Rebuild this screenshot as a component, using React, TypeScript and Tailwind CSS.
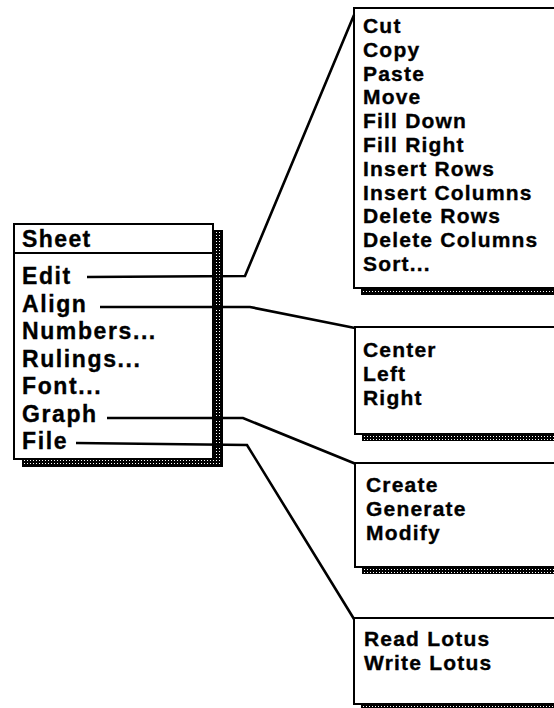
import React from "react";

type BoxProps = {
  left: number;
  top: number;
  width: number;
  height: number;
  dx: number;
  dy: number;
  className?: string;
  children: React.ReactNode;
};

function ShadowBox({ left, top, width, height, dx, dy, className, children }: BoxProps) {
  return (
    <>
      <div
        className="absolute border border-black bg-black bg-[radial-gradient(circle,#ffffff_0.55px,transparent_1px)] bg-[length:3px_3px]"
        style={{ left: left + dx, top: top + dy, width, height }}
      />
      <div
        className={"absolute border-2 border-black bg-white " + (className ?? "")}
        style={{ left, top, width, height }}
      >
        {children}
      </div>
    </>
  );
}

const editItems = [
  "Cut",
  "Copy",
  "Paste",
  "Move",
  "Fill Down",
  "Fill Right",
  "Insert Rows",
  "Insert Columns",
  "Delete Rows",
  "Delete Columns",
  "Sort...",
];

const sheetItems = ["Edit", "Align", "Numbers...", "Rulings...", "Font...", "Graph", "File"];

function SubList({ items, lh }: { items: string[]; lh: string }) {
  return (
    <div className={"flex flex-col text-[21px] font-bold tracking-[1.2px] text-black [-webkit-text-stroke:0.35px_black] " + lh}>
      {items.map((t) => (
        <div key={t} className="whitespace-nowrap">
          {t}
        </div>
      ))}
    </div>
  );
}

export default function App() {
  return (
    <div className="relative h-[708px] w-[554px] overflow-hidden bg-white font-['Liberation_Sans',Arial,Helvetica,sans-serif] text-black">
      {/* Main Sheet menu */}
      <ShadowBox left={13} top={223} width={201} height={237} dx={9} dy={7}>
        <div className="flex h-full flex-col [-webkit-text-stroke:0.35px_black]">
          <div className="border-b-2 border-black pl-[7px] pt-[1px] text-[23px] font-bold leading-[26px] tracking-[1.4px]">
            Sheet
          </div>
          <div className="flex flex-col pl-[7px] pt-[9px] text-[23px] font-bold leading-[27.5px] tracking-[1.6px]">
            {sheetItems.map((t) => (
              <div key={t} className="whitespace-nowrap">
                {t}
              </div>
            ))}
          </div>
        </div>
      </ShadowBox>

      {/* Edit submenu */}
      <ShadowBox left={353} top={7} width={230} height={282} dx={8} dy={6} className="pl-[8px] pt-[5px]">
        <SubList items={editItems} lh="leading-[23.8px]" />
      </ShadowBox>

      {/* Align submenu */}
      <ShadowBox left={354} top={326} width={230} height={109} dx={8} dy={6} className="pl-[7px] pt-[10px]">
        <SubList items={["Center", "Left", "Right"]} lh="leading-[24px]" />
      </ShadowBox>

      {/* Graph submenu */}
      <ShadowBox left={354} top={462} width={230} height={106} dx={8} dy={6} className="pl-[10px] pt-[9px]">
        <SubList items={["Create", "Generate", "Modify"]} lh="leading-[24px]" />
      </ShadowBox>

      {/* File submenu */}
      <ShadowBox left={353} top={617} width={230} height={88} dx={8} dy={6} className="pl-[9px] pt-[8px]">
        <SubList items={["Read Lotus", "Write Lotus"]} lh="leading-[24px]" />
      </ShadowBox>

      {/* Connectors */}
      <svg
        className="pointer-events-none absolute left-0 top-0"
        width={554}
        height={708}
        viewBox="0 0 554 708"
      >
        <g fill="none" stroke="#000" strokeWidth={2.6} strokeLinejoin="miter">
          <polyline points="87,277 245,276 354,15" />
          <polyline points="100,307 250,307 355,328" />
          <polyline points="107,418 243,418 356,464" />
          <polyline points="76,443 247,445 354,619" />
        </g>
      </svg>
    </div>
  );
}
